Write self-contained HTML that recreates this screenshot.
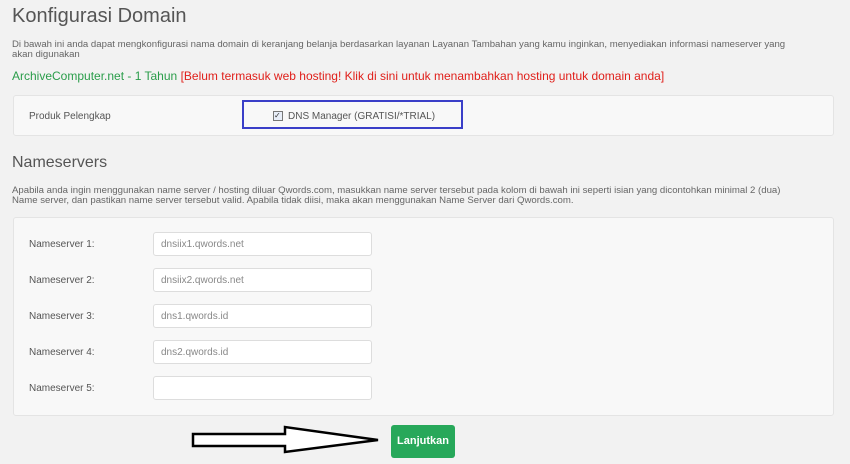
<!DOCTYPE html>
<html><head><style>
body{margin:0;width:850px;height:464px;background:#f2f2f2;font-family:"Liberation Sans",sans-serif;position:relative;overflow:hidden;color:#555}
.a{position:absolute;white-space:nowrap}
.panel{position:absolute;left:13px;width:819px;background:#f8f8f8;border:1px solid #e4e4e4;border-radius:3px}
.inp{position:absolute;left:153px;width:219px;height:24px;background:#fff;border:1px solid #ddd;border-radius:3px;font-size:10px;color:#888;line-height:24px;padding-left:7px;box-sizing:border-box}
.lbl{position:absolute;left:29px;font-size:10px;color:#555}
</style></head><body>
<div class="a" style="left:12px;top:5px;font-size:20px;color:#555">Konfigurasi Domain</div>
<div class="a" style="left:12px;top:40px;font-size:9.6px;line-height:10px;color:#666">Di bawah ini anda dapat mengkonfigurasi nama domain di keranjang belanja berdasarkan layanan Layanan Tambahan yang kamu inginkan, menyediakan informasi nameserver yang<br>akan digunakan</div>
<div class="a" style="left:12px;top:69px;font-size:12px"><span style="color:#2a9d4a">ArchiveComputer.net - 1 Tahun</span> <span style="color:#e0201b">[Belum termasuk web hosting! Klik di sini untuk menambahkan hosting untuk domain anda]</span></div>
<div class="panel" style="top:95px;height:39px"></div>
<div class="a" style="left:29px;top:111px;font-size:10px">Produk Pelengkap</div>
<div class="a" style="left:242px;top:100px;width:217px;height:25px;border:2px solid #3a3fc8"></div>
<div class="a" style="left:273px;top:111px;width:8px;height:8px;border:1px solid #777;background:#e8eef8;font-size:8px;line-height:8px;color:#333">✓</div>
<div class="a" style="left:288px;top:111px;font-size:10px">DNS Manager (GRATISI/*TRIAL)</div>
<div class="a" style="left:12px;top:154px;font-size:16px">Nameservers</div>
<div class="a" style="left:12px;top:186px;font-size:9.6px;line-height:10px;color:#666">Apabila anda ingin menggunakan name server / hosting diluar Qwords.com, masukkan name server tersebut pada kolom di bawah ini seperti isian yang dicontohkan minimal 2 (dua)<br>Name server, dan pastikan name server tersebut valid. Apabila tidak diisi, maka akan menggunakan Name Server dari Qwords.com.</div>
<div class="panel" style="top:217px;height:197px"></div>
<div class="lbl" style="top:239px">Nameserver 1:</div><div class="inp" style="top:232px">dnsiix1.qwords.net</div>
<div class="lbl" style="top:275px">Nameserver 2:</div><div class="inp" style="top:268px">dnsiix2.qwords.net</div>
<div class="lbl" style="top:311px">Nameserver 3:</div><div class="inp" style="top:304px">dns1.qwords.id</div>
<div class="lbl" style="top:347px">Nameserver 4:</div><div class="inp" style="top:340px">dns2.qwords.id</div>
<div class="lbl" style="top:383px">Nameserver 5:</div><div class="inp" style="top:376px"></div>
<svg class="a" style="left:0;top:0" width="850" height="464"><polygon points="193,434 285,434 285,427 378,440 285,452 285,446 193,446" fill="#fff" stroke="#000" stroke-width="2.5" stroke-linejoin="miter"/></svg>
<div class="a" style="left:391px;top:425px;width:64px;height:33px;background:#27a85a;border-radius:3px;color:#fff;font-size:11px;font-weight:bold;line-height:33px;text-align:center">Lanjutkan</div>
</body></html>
